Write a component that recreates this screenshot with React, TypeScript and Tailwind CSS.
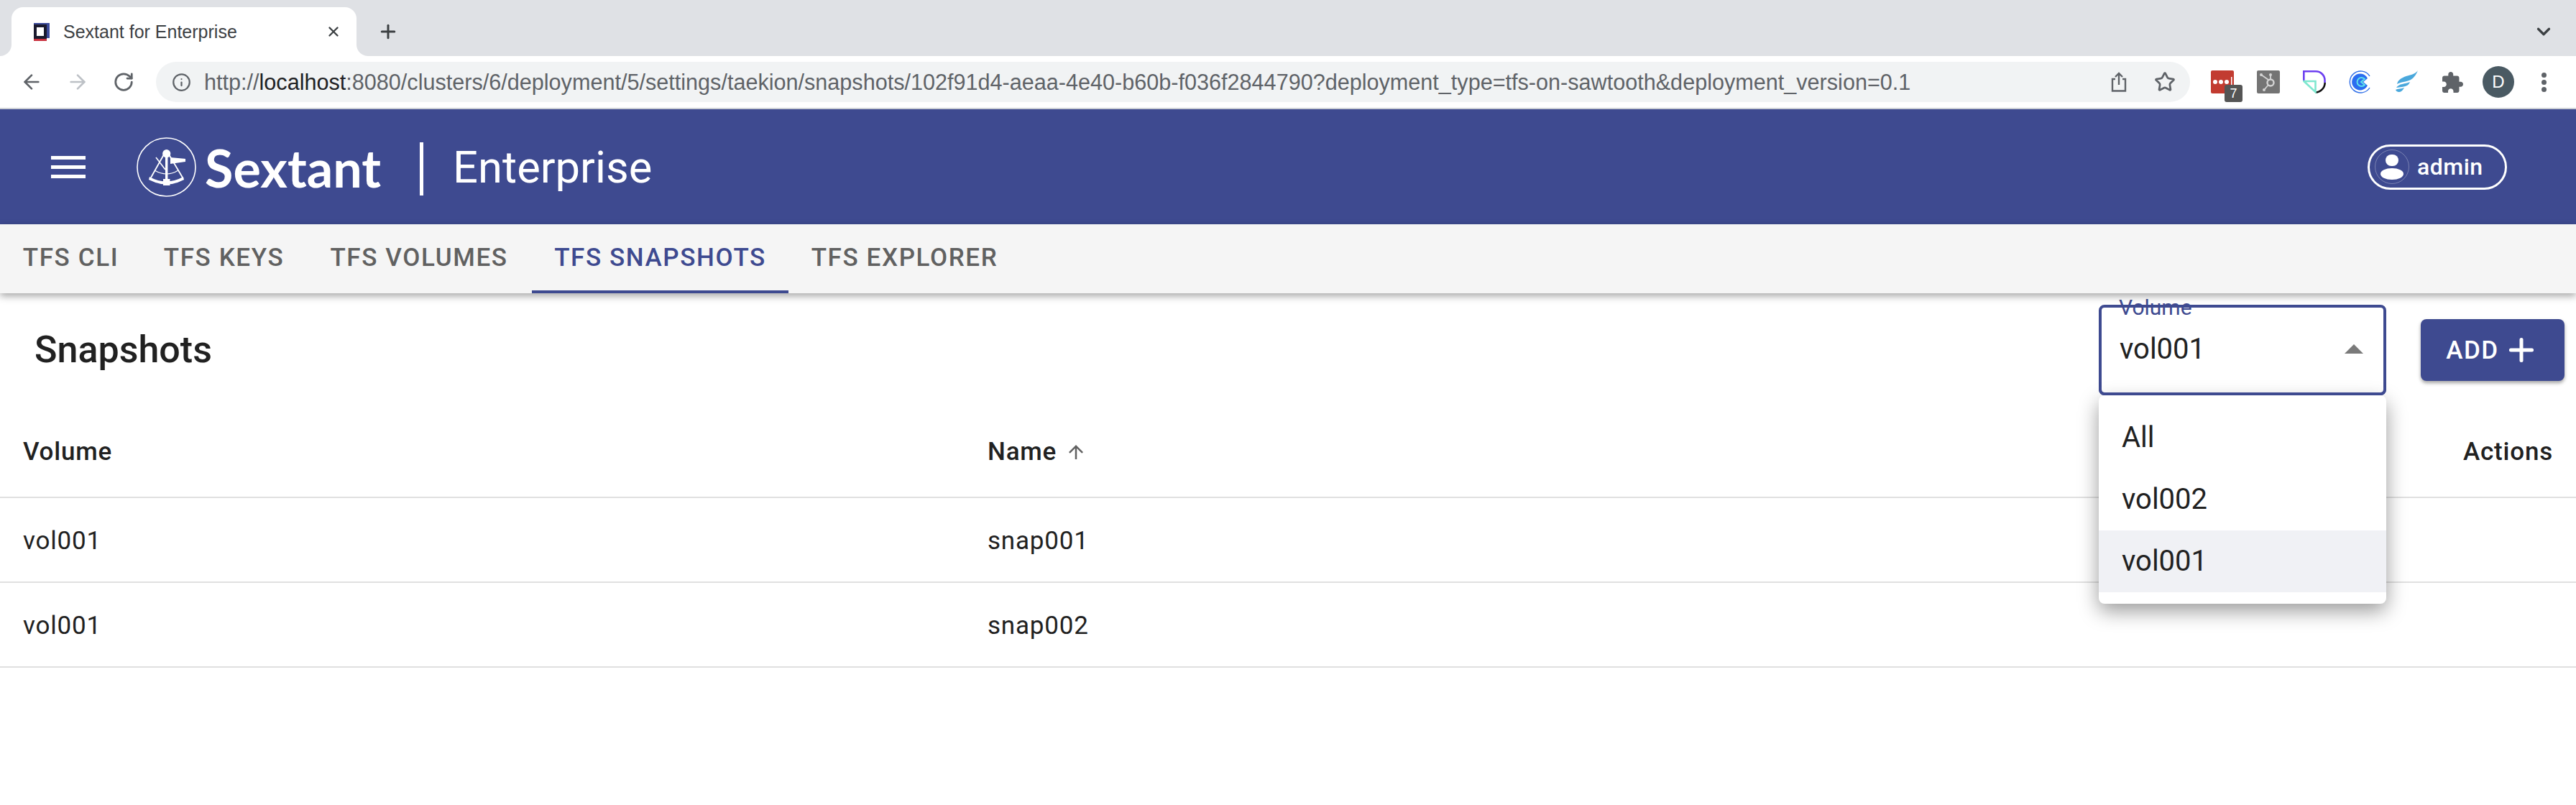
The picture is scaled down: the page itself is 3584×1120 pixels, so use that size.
import { ArrowLeft, ArrowRight, Info, Plus, RotateCw, Star, X, ChevronDown } from "lucide-react";

const TABS = [
  { label: "TFS CLI", width: "w-[197px]" },
  { label: "TFS KEYS", width: "w-[229px]" },
  { label: "TFS VOLUMES", width: "w-[314px]" },
  { label: "TFS SNAPSHOTS", width: "w-[357px]", active: true },
  { label: "TFS EXPLORER", width: "w-[323px]" },
];

const ROWS = [
  { volume: "vol001", name: "snap001" },
  { volume: "vol001", name: "snap002" },
];

function Favicon() {
  return (
    <svg width="25" height="25" viewBox="0 0 25 25">
      <path d="M0 2h3v23h18v-3h-3V2z" fill="#c8323f" />
      <path d="M3 0h22v21h-4V2H3z" fill="#3b4a9a" />
      <rect x="3" y="2" width="18" height="20" fill="#1a1a2e" />
      <rect x="7" y="6" width="10" height="12" fill="#fff" />
    </svg>
  );
}

function SextantMark() {
  return (
    <svg width="83" height="83" viewBox="0 0 83 83" fill="none" stroke="#fff">
      <circle cx="41.5" cy="41.5" r="40.5" strokeWidth="1.6" />
      <circle cx="41.7" cy="22.7" r="5.6" fill="#fff" stroke="none" />
      <path d="M41.7 26v36" strokeWidth="3.4" />
      <path d="M38 24l-18 32M45 24l19 32" strokeWidth="1.8" />
      <path d="M27 28l13 17" strokeWidth="1.6" />
      <path d="M47 28l21 2v4l-21 3z" fill="#fff" stroke="none" />
      <path d="M25 46q17 10 33 0" strokeWidth="1.2" />
      <path d="M18 55q23 13 47 0l1 4q-24 13-49 0z" fill="#fff" stroke="none" />
      <rect x="37" y="58" width="9.5" height="9" fill="#fff" stroke="none" />
    </svg>
  );
}

function ShareIcon() {
  return (
    <svg width="22" height="28" viewBox="0 0 22 28" fill="none" stroke="#5f6368" strokeWidth="2.4">
      <path d="M6 10H2v16.500h18V10h-4M11 18V2M6 7l5-5 5 5" />
    </svg>
  );
}

function ExtensionIcons() {
  return (
    <div className="ml-[29px] flex items-center">
      {/* password manager */}
      <div className="relative h-[32px] w-[32px]">
        <svg width="32" height="32" viewBox="0 0 32 32">
          <rect width="32" height="32" rx="2" fill="#c23b30" />
          <circle cx="6" cy="16" r="3" fill="#fff" />
          <circle cx="14" cy="16" r="3" fill="#fff" />
          <circle cx="22" cy="16" r="3" fill="#fff" />
          <rect x="28" y="9" width="1.500" height="14" fill="#fff" />
        </svg>
        <div className="absolute left-[19px] top-[20px] flex h-[24px] w-[25px] items-center justify-center rounded-[3px] bg-[#555555] text-[18px] leading-none text-white">
          7
        </div>
      </div>
      <svg className="ml-[32px]" width="32" height="32" viewBox="0 0 32 32" fill="none" stroke="#d4d4d4" strokeWidth="1.800">
        <rect width="32" height="32" rx="2" fill="#747474" stroke="none" />
        <circle cx="19" cy="17" r="4.500" strokeWidth="2.400" />
        <path d="M16 13L6 6M19 12V6M16 20l-5 6" />
        <circle cx="6" cy="6" r="2" fill="#d4d4d4" stroke="none" />
        <circle cx="19" cy="6" r="2" fill="#d4d4d4" stroke="none" />
        <circle cx="10" cy="27" r="2" fill="#d4d4d4" stroke="none" />
      </svg>
      <svg className="ml-[32px]" width="32" height="32" viewBox="0 0 32 32" fill="none" strokeWidth="2.600">
        <path d="M30.500 17V14A12.500 12.500 0 0 0 18 1.300H1.300V14" stroke="#6c3ff0" />
        <path d="M30.700 17A14 14 0 0 1 17.500 30.700" stroke="#111" />
        <path d="M1.500 15H17.500V30z" stroke="#7fe8d0" />
      </svg>
      <svg className="ml-[32px]" width="32" height="32" viewBox="0 0 32 32" fill="none">
        <path d="M29 8A15 15 0 1 0 29 24" stroke="#2f6fe8" strokeWidth="1.400" />
        <path d="M26 11A11.500 11.500 0 1 0 26 21L20 16z" fill="#2a6df0" />
        <path d="M22 12A6 6 0 1 0 22 20L17 16z" fill="none" stroke="#5fe0ea" strokeWidth="2" />
      </svg>
      <svg className="ml-[32px]" width="32" height="32" viewBox="0 0 32 32" fill="#4aa8dc">
        <path d="M32 0C28 6 20 6 13 9 6 12 4 15 3 19c5-3 13-3 19-6 5-3 8-8 10-13z" />
        <path d="M21 16C14 19 6 18 2 24c5-1 11-1 15-3 2-1 3-3 4-5z" />
        <path d="M13 24C9 26 4 25 1 27c2 4 8 5 12-3z" />
      </svg>
      <svg className="ml-[34px]" width="29" height="29" viewBox="2 1 21 21" fill="#5f6368">
        <path d="M20.500 11H19V7c0-1.100-.9-2-2-2h-4V3.500C13 2.120 11.880 1 10.500 1S8 2.120 8 3.500V5H4c-1.100 0-1.990.9-1.990 2v3.800H3.500c1.490 0 2.700 1.210 2.700 2.700s-1.210 2.700-2.700 2.700H2V20c0 1.100.9 2 2 2h3.800v-1.500c0-1.490 1.210-2.700 2.700-2.700 1.490 0 2.700 1.210 2.700 2.700V22H17c1.100 0 2-.9 2-2v-4h1.500c1.380 0 2.500-1.120 2.500-2.500S21.880 11 20.500 11z" />
      </svg>
      <div className="ml-[27px] flex h-[44px] w-[44px] items-center justify-center rounded-full bg-[#4a5a63] text-[24px] leading-none text-white">
        D
      </div>
      <div className="ml-[38px] flex flex-col gap-[3px]">
        <span className="h-[7px] w-[7px] rounded-full bg-[#5f6368]" />
        <span className="h-[7px] w-[7px] rounded-full bg-[#5f6368]" />
        <span className="h-[7px] w-[7px] rounded-full bg-[#5f6368]" />
      </div>
    </div>
  );
}

function BrowserChrome() {
  return (
    <div className="[font-family:'Liberation_Sans',sans-serif]">
      {/* tab strip */}
      <div className="flex h-[78px] items-end bg-[#dfe1e5] pl-[16px]">
        <div className="relative flex h-[68px] w-[480px] items-center rounded-t-[16px] bg-white pl-[28px]">
          <span className="absolute bottom-0 left-[-16px] h-[16px] w-[16px] bg-white">
            <span className="block h-full w-full rounded-br-[16px] bg-[#dfe1e5]" />
          </span>
          <span className="absolute bottom-0 right-[-16px] h-[16px] w-[16px] bg-white">
            <span className="block h-full w-full rounded-bl-[16px] bg-[#dfe1e5]" />
          </span>
          <Favicon />
          <span className="ml-[19px] text-[25px] leading-none text-[#3c4043]">Sextant for Enterprise</span>
          <X className="absolute left-[437px]" size={22} color="#3c4043" strokeWidth={2.6} />
        </div>
        <Plus className="mb-[19px] ml-[29px]" size={30} color="#3c4043" strokeWidth={2.4} />
        <ChevronDown className="mb-[19px] ml-auto mr-[30px]" size={30} color="#3c4043" strokeWidth={2.6} />
      </div>
      {/* toolbar */}
      <div className="flex h-[72px] items-center bg-white">
        <ArrowLeft className="ml-[28px]" size={32} color="#5f6368" strokeWidth={2} />
        <ArrowRight className="ml-[32px]" size={32} color="#bdc1c6" strokeWidth={2} />
        <RotateCw className="ml-[33px]" size={30} color="#5f6368" strokeWidth={2.2} />
        <div className="ml-[30px] flex h-[56px] w-[2830px] items-center rounded-full bg-[#f1f3f4] pr-[20px]">
          <Info className="ml-[22px]" size={27} color="#5f6368" strokeWidth={2} />
          <span className="ml-[18px] whitespace-nowrap text-[30.6px] leading-none text-[#5f6368]">
            http://<span className="text-[#202124]">localhost</span>
            :8080/clusters/6/deployment/5/settings/taekion/snapshots/102f91d4-aeaa-4e40-b60b-f036f2844790?deployment_type=tfs-on-sawtooth&deployment_version=0.1
          </span>
          <div className="ml-auto flex items-center gap-[38px]">
            <ShareIcon />
            <Star size={30} color="#5f6368" strokeWidth={2.2} />
          </div>
        </div>
        <ExtensionIcons />
      </div>
      <div className="h-[2px] bg-[#cdd0d6]" />
    </div>
  );
}

function AppHeader() {
  return (
    <header className="flex h-[160px] items-center bg-[#3e4a90] text-white">
      <div className="ml-[71px] flex w-[48px] flex-col gap-[8px]">
        <span className="h-[5px] bg-white" />
        <span className="h-[5px] bg-white" />
        <span className="h-[5px] bg-white" />
      </div>
      <div className="ml-[71px] flex items-center">
        <SextantMark />
        <span className="ml-[12px] pt-[2px] text-[72px] font-bold leading-none [font-family:Lato,sans-serif]">Sextant</span>
        <span className="ml-[54px] mt-[6px] h-[74px] w-[5px] bg-white" />
        <span className="ml-[41px] pt-[3px] text-[61.5px] leading-none">Enterprise</span>
      </div>
      <div className="ml-auto mr-[96px] flex h-[63px] w-[194px] items-center rounded-full border-[3px] border-white pl-[7px]">
        <div className="flex h-[48px] w-[48px] flex-col items-center justify-center rounded-full border border-white/30">
          <span className="h-[16px] w-[18px] rounded-full bg-white" />
          <span className="mt-[3px] h-[16px] w-[32px] rounded-[50%] bg-white" />
        </div>
        <span className="ml-[11px] text-[32px] font-medium leading-none tracking-[0.5px]">admin</span>
      </div>
    </header>
  );
}

function TabBar() {
  return (
    <nav className="relative z-10 flex h-[96px] bg-[#f5f5f5] shadow-[0_4px_10px_rgba(0,0,0,0.35)]">
      {TABS.map((tab) => (
        <div
          key={tab.label}
          className={`flex items-center justify-center whitespace-nowrap border-b-4 text-[35px] font-medium leading-none tracking-[1.6px] ${tab.width} ${
            tab.active ? "border-[#3e4a90] text-[#3e4a90]" : "border-transparent text-[#616161]"
          }`}
        >
          {tab.label}
        </div>
      ))}
    </nav>
  );
}

function VolumeSelect() {
  return (
    <div className="relative h-[126px] w-[400px] rounded-[8px] border-4 border-[#3e4a90]">
      <span className="absolute left-[24px] top-[-18px] text-[30px] leading-[36px] text-[#3e4a90]">Volume</span>
      <span className="absolute left-[25px] top-[38px] text-[40px] leading-none text-[#212121]">vol001</span>
      <span className="absolute left-[338px] top-[51px] h-0 w-0 border-x-[13px] border-b-[13px] border-x-transparent border-b-[#7a7a7a]" />
      {/* open menu */}
      <div className="absolute left-[-4px] top-[122px] z-20 w-[400px] rounded-[8px] bg-white py-[16px] shadow-[0_10px_28px_rgba(0,0,0,0.4)]">
        {["All", "vol002", "vol001"].map((option) => (
          <div
            key={option}
            className={`flex h-[86px] items-center pl-[32px] text-[40px] leading-none text-[#212121] ${
              option === "vol001" ? "bg-[#f0f1f5]" : ""
            }`}
          >
            {option}
          </div>
        ))}
      </div>
      {/* keeps the outline's lower edge above the menu shadow */}
      <span className="absolute bottom-[-4px] left-[-4px] right-[-4px] z-30 h-[12px] rounded-b-[8px] border-x-4 border-b-4 border-[#3e4a90]" />
    </div>
  );
}

function SnapshotsTable() {
  return (
    <div className="text-[35px] leading-none tracking-[0.8px] text-[#212121]">
      <div className="flex h-[127px] items-center border-b-2 border-[#e0e0e0] px-[32px] font-medium">
        <div className="w-[1342px]">Volume</div>
        <div className="flex items-center">
          Name
          <svg className="ml-[12px]" width="30" height="30" viewBox="0 0 24 24" fill="#616161">
            <path d="M4 12l1.410 1.410L11 7.830V20h2V7.830l5.580 5.590L20 12l-8-8-8 8z" />
          </svg>
        </div>
        <div className="ml-auto">Actions</div>
      </div>
      {ROWS.map((row) => (
        <div key={row.name} className="flex h-[118px] items-center border-b-2 border-[#e0e0e0] px-[32px] pt-[2px]">
          <div className="w-[1342px]">{row.volume}</div>
          <div>{row.name}</div>
        </div>
      ))}
    </div>
  );
}

export default function App() {
  return (
    <div className="h-[1120px] w-[3584px] overflow-hidden bg-white [font-family:Roboto,sans-serif]">
      <BrowserChrome />
      <AppHeader />
      <TabBar />
      <div className="flex h-[158px] items-center pl-[48px] pr-[16px]">
        <h2 className="text-[52px] font-medium leading-none text-[#212121]">Snapshots</h2>
        <div className="ml-auto">
          <VolumeSelect />
        </div>
        <button className="ml-[48px] flex h-[86px] w-[200px] items-center justify-center rounded-[8px] bg-[#3e4a90] text-[35px] font-medium leading-none tracking-[1.5px] text-white shadow-[0_3px_5px_rgba(0,0,0,0.35)]">
          ADD
          <Plus className="ml-[6px]" size={50} strokeWidth={2.4} />
        </button>
      </div>
      <SnapshotsTable />
    </div>
  );
}
